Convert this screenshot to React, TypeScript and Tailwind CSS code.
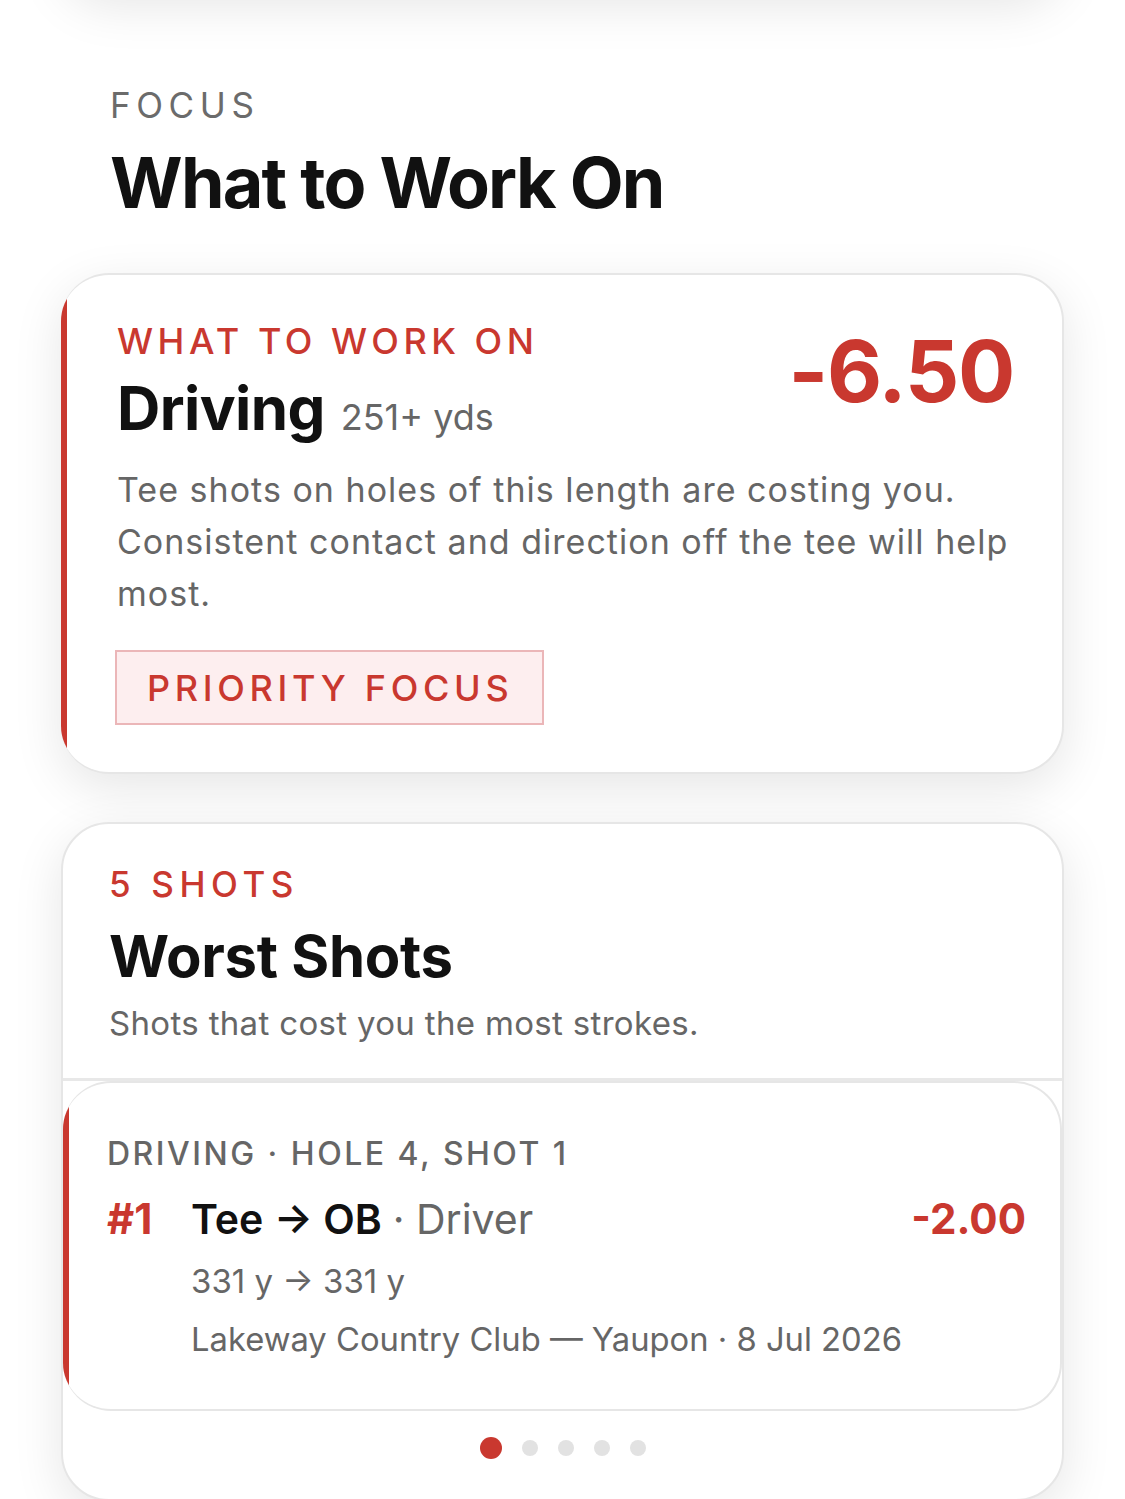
import React from "react";

const RED = "text-[#c9382f]";

export default function App() {
  return (
    <div className="min-h-[1499px] w-[1125px] overflow-hidden bg-white font-['Inter','Noto_Sans',sans-serif]">
      {/* card above, only its shadow is visible */}
      <div className="mx-[61px] -mt-[118px] h-[110px] rounded-[48px] border-2 border-[#e6e6e6] bg-white shadow-[0_14px_50px_rgba(0,0,0,0.1)]" />

      {/* header */}
      <div className="px-[110px] pt-[92px]">
        <div className="text-[35px] leading-[42px] tracking-[0.16em] text-[#6b6b6b]">FOCUS</div>
        <div className="mt-[15px] text-[70px] font-bold leading-[84px] tracking-[-0.025em] text-[#111111]">
          What to Work On
        </div>
      </div>

      {/* card 1 */}
      <div className="mx-[61px] mt-[48px] flex overflow-hidden rounded-[48px] border-y-2 border-r-2 border-[#e6e6e6] bg-white shadow-[0_14px_50px_rgba(0,0,0,0.1)]">
        <div className="w-[6px] shrink-0 bg-[#c9382f]" />
        <div className="flex-1 pb-[47px] pl-[50px] pr-[48px] pt-[45px]">
          <div className="flex items-start justify-between">
            <div>
              <div className={`text-[36px] font-medium leading-[43px] tracking-[0.125em] ${RED}`}>
                WHAT TO WORK ON
              </div>
              <div className="mt-[9px] flex items-baseline gap-[16px] leading-[72px]">
                <span className="text-[60px] font-bold tracking-[-0.01em] text-[#111111]">Driving</span>
                <span className="text-[36px] text-[#666666]">251+ yds</span>
              </div>
            </div>
            <div className={`mt-[9px] text-[85px] font-bold leading-[85px] tracking-[-0.015em] ${RED}`}>-6.50</div>
          </div>
          <p className="mt-[11px] text-[34px] leading-[52px] tracking-[0.03em] text-[#666666]">
            Tee shots on holes of this length are costing you. Consistent contact and direction off the tee will
            help most.
          </p>
          <div className="-ml-[2px] mt-[30px] inline-flex h-[75px] items-center border-2 border-[#ebb6b8] bg-[#fdeeef] pl-[30px] pr-[29px]">
            <span className={`text-[36px] font-medium tracking-[0.13em] ${RED}`}>PRIORITY FOCUS</span>
          </div>
        </div>
      </div>

      {/* card 2 */}
      <div className="mx-[61px] mt-[48px] overflow-hidden rounded-[48px] border-2 border-[#e6e6e6] bg-white shadow-[0_14px_50px_rgba(0,0,0,0.1)]">
        <div className="border-b-[3px] border-[#e8e8e8] pb-[33px] pl-[46px] pt-[39px]">
          <div className={`text-[35px] font-medium leading-[42px] tracking-[0.16em] ${RED}`}>5 SHOTS</div>
          <div className="mt-[17px] text-[58px] font-bold leading-[68px] tracking-[-0.005em] text-[#111111]">
            Worst Shots
          </div>
          <div className="mt-[11px] text-[33px] leading-[44px] tracking-[0.01em] text-[#666666]">
            Shots that cost you the most strokes.
          </div>
        </div>

        {/* shot card */}
        <div className="flex overflow-hidden rounded-[48px] border-y-2 border-r-2 border-[#e6e6e6] bg-white">
          <div className="w-[6px] shrink-0 bg-[#c9382f]" />
          <div className="flex-1 pb-[48px] pl-[38px] pr-[34px] pt-[51px]">
            <div className="text-[32px] font-medium leading-[40px] tracking-[0.078em] text-[#666666]">
              DRIVING · HOLE 4, SHOT 1
            </div>
            <div className="mt-[19px] flex items-baseline leading-[52px]">
              <span className={`w-[84px] text-[42px] font-bold ${RED}`}>#1</span>
              <span className="text-[41px] font-semibold text-[#111111]">Tee → OB</span>
              <span className="ml-[11px] text-[41px] text-[#666666]">· Driver</span>
              <span className={`ml-auto text-[42px] font-bold ${RED}`}>-2.00</span>
            </div>
            <div className="ml-[84px] mt-[14px] text-[33px] leading-[44px] text-[#666666]">331 y → 331 y</div>
            <div className="ml-[84px] mt-[14px] text-[32.75px] leading-[44px] text-[#666666]">
              Lakeway Country Club — Yaupon · 8 Jul 2026
            </div>
          </div>
        </div>

        {/* dots */}
        <div className="flex items-center justify-center gap-[20px] pb-[40px] pt-[26px]">
          <span className="h-[22px] w-[22px] rounded-full bg-[#c9382f]" />
          <span className="h-[16px] w-[16px] rounded-full bg-[#e2e2e2]" />
          <span className="h-[16px] w-[16px] rounded-full bg-[#e2e2e2]" />
          <span className="h-[16px] w-[16px] rounded-full bg-[#e2e2e2]" />
          <span className="h-[16px] w-[16px] rounded-full bg-[#e2e2e2]" />
        </div>
      </div>
    </div>
  );
}
